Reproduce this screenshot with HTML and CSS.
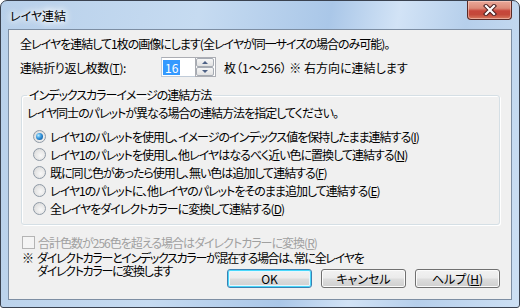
FILE: index.html
```html
<!DOCTYPE html>
<html lang="ja">
<head>
    <meta charset="UTF-8">
    <title>レイヤ連結</title>
    <link rel="stylesheet" href="styles.css">
</head>
<body>

<div class="window">
    <div class="titlebar">
        <span class="title">レイヤ連結</span>
        <span class="close">
            <svg width="14" height="12" viewBox="0 0 14 12">
                <path d="M3 2 L11 10 M11 2 L3 10" stroke="#4a2020" stroke-width="4.2" stroke-linecap="square"/>
                <path d="M3 2 L11 10 M11 2 L3 10" stroke="#ffffff" stroke-width="2.2" stroke-linecap="square"/>
            </svg>
        </span>
    </div>

    <div class="client">
        <p class="intro">全レイヤを連結して1枚の画像にします(全レイヤが同一サイズの場合のみ可能)。</p>

        <div class="count-row">
            <span class="count-label">連結折り返し枚数(<u>T</u>):</span>
            <div class="spin">
                <span class="spin-value"><span class="sel">16</span></span>
                <span class="spin-btns">
                    <span class="spin-btn"><span class="arrow-up"></span></span>
                    <span class="spin-btn"><span class="arrow-down"></span></span>
                </span>
            </div>
            <span class="count-note">枚（1～256） ※ 右方向に連結します</span>
        </div>

        <fieldset class="group">
            <legend>インデックスカラーイメージの連結方法</legend>
            <p class="group-desc">レイヤ同士のパレットが異なる場合の連結方法を指定してください。</p>
            <ul class="radios">
                <li><span class="radio checked"></span>レイヤ1のパレットを使用し、イメージのインデックス値を保持したまま連結する(<u>I</u>)</li>
                <li><span class="radio"></span>レイヤ1のパレットを使用し、他レイヤはなるべく近い色に置換して連結する(<u>N</u>)</li>
                <li><span class="radio"></span>既に同じ色があったら使用し、無い色は追加して連結する(<u>F</u>)</li>
                <li><span class="radio"></span>レイヤ1のパレットに、他レイヤのパレットをそのまま追加して連結する(<u>E</u>)</li>
                <li><span class="radio"></span>全レイヤをダイレクトカラーに変換して連結する(<u>D</u>)</li>
            </ul>
        </fieldset>

        <div class="check-row">
            <span class="checkbox"></span>合計色数が256色を超える場合はダイレクトカラーに変換(<u>R</u>)
        </div>

        <div class="footer">
            <div class="note-line1"><span class="mark">※</span>ダイレクトカラーとインデックスカラーが混在する場合は、常に全レイヤを</div>
            <div class="note-line2">ダイレクトカラーに変換します</div>
            <div class="buttons">
                <span class="btn default">OK</span>
                <span class="btn">キャンセル</span>
                <span class="btn">ヘルプ(<u>H</u>)</span>
            </div>
        </div>
    </div>
</div>

</body>
</html>
```

FILE: styles.css
```css
body {
    margin: 0;
    background: #ffffff;
    font-family: "Noto Sans CJK JP", "Liberation Sans", sans-serif;
    font-size: 12px;
    font-feature-settings: "palt";
    letter-spacing: -1px;
    color: #000000;
}

u {
    text-decoration: underline;
    text-underline-offset: 1px;
}

.window {
    width: 520px;
    height: 308px;
    box-sizing: border-box;
    border: 1px solid #3a4250;
    border-radius: 7px 7px 3px 3px;
    background: linear-gradient(100deg, #b8d0ea 0%, #c6dbf1 35%, #aac7e8 58%, #d2e3f6 70%, #b6cfeb 82%, #cde0f4 100%);
    display: flex;
    flex-direction: column;
    padding: 0 7px 7px 7px;
    overflow: hidden;
}

.titlebar {
    height: 28px;
    display: flex;
    justify-content: space-between;
    align-items: flex-start;
}

.title {
    margin: 6px 0 0 2px;
    line-height: 18px;
    letter-spacing: 0;
    text-shadow: 0 0 6px #ffffff, 0 0 8px #ffffff, 0 0 10px #ffffff;
}

.close {
    width: 43px;
    height: 18px;
    border: 1px solid #5a2a26;
    border-top: none;
    border-radius: 0 0 4px 4px;
    background: linear-gradient(#e9a899 0%, #dc8a78 40%, #c7473b 55%, #c4493a 75%, #d77a5f 100%);
    box-shadow: inset 0 0 0 1px rgba(255, 220, 210, 0.5);
    display: flex;
    justify-content: center;
    align-items: center;
}

.client {
    flex: 1;
    background: #f0f0f0;
    border: 1px solid #7d8ea3;
    padding: 5px 11px 0 11px;
    display: flex;
    flex-direction: column;
}

.intro {
    margin: 0;
    line-height: 18px;
}

.count-row {
    display: flex;
    align-items: center;
    margin-top: 4px;
    height: 20px;
}

.count-label {
    width: 141px;
    letter-spacing: -0.4px;
}

.spin {
    display: flex;
    height: 20px;
}

.spin-value {
    width: 32px;
    height: 18px;
    background: #ffffff;
    border: 1px solid #c0cbd8;
    border-top-color: #abadb3;
    border-right: none;
    display: flex;
    align-items: center;
    padding-left: 1px;
}

.sel {
    background: #3399ff;
    color: #ffffff;
    padding: 0 2px;
    line-height: 15px;
    letter-spacing: 0;
}

.spin-btns {
    display: flex;
    flex-direction: column;
    width: 18px;
    border: 1px solid #abadb3;
    background: #ffffff;
    padding: 0 1px 0 0;
}

.spin-btn {
    flex: 1;
    border: 1px solid #a6abb3;
    border-radius: 2px;
    background: linear-gradient(#f6f6f6, #e2e2e2);
    display: flex;
    justify-content: center;
    align-items: center;
}

.arrow-up {
    width: 0;
    height: 0;
    border-left: 3px solid transparent;
    border-right: 3px solid transparent;
    border-bottom: 3px solid #4d6185;
}

.arrow-down {
    width: 0;
    height: 0;
    border-left: 3px solid transparent;
    border-right: 3px solid transparent;
    border-top: 3px solid #4d6185;
}

.count-note {
    margin-left: 8px;
    letter-spacing: 0;
}

.group {
    margin: 9px 0 0 1px;
    padding: 0 5px 7px 5px;
    border: 1px solid #d5dfe5;
    border-radius: 3px;
    box-shadow: inset 1px 1px 0 #ffffff, 1px 1px 0 #ffffff;
}

.group legend {
    padding: 0 2px;
    line-height: 18px;
}

.group-desc {
    margin: 0;
    line-height: 18px;
}

.radios {
    list-style: none;
    margin: 5px 0 0 0;
    padding: 0 0 0 6px;
}

.radios li {
    display: flex;
    align-items: center;
    height: 18px;
}

.radio {
    width: 11px;
    height: 11px;
    border: 1px solid #8f9aa6;
    border-radius: 50%;
    background: radial-gradient(circle at 60% 60%, #f8f8f8 0%, #e3e3e3 60%, #d0d0d0 100%);
    margin-right: 4px;
    position: relative;
    flex-shrink: 0;
}

.radio.checked::after {
    content: "";
    position: absolute;
    left: 2px;
    top: 2px;
    width: 7px;
    height: 7px;
    border-radius: 50%;
    background: radial-gradient(circle at 35% 35%, #b8ecff 0%, #3d9be0 40%, #1162a8 80%, #0b4f8c 100%);
}

.check-row {
    display: flex;
    align-items: center;
    height: 18px;
    margin: 8px 0 0 2px;
    color: #a0a0a0;
}

.checkbox {
    width: 11px;
    height: 11px;
    border: 1px solid #b4b4b4;
    background: #f4f4f4;
    margin-right: 3px;
}

.footer {
    display: grid;
    grid-template-columns: 1fr auto;
    margin: 0 0 0 2px;
}

.note-line1 {
    grid-column: 1 / -1;
    line-height: 13px;
    letter-spacing: -1.3px;
}

.mark {
    display: inline-block;
    width: 15px;
}

.note-line2 {
    line-height: 13px;
    padding-left: 15px;
    align-self: start;
    letter-spacing: -1.3px;
}

.buttons {
    display: flex;
    gap: 9px;
    margin-top: 5px;
    letter-spacing: 0;
}

.btn {
    width: 83px;
    height: 17px;
    border: 1px solid #707070;
    border-radius: 3px;
    background: linear-gradient(#f2f2f2 0%, #ebebeb 48%, #dddddd 52%, #cfcfcf 100%);
    box-shadow: inset 0 0 0 1px #fbfbfb;
    display: flex;
    justify-content: center;
    align-items: center;
    line-height: 17px;
}

.btn.default {
    border-color: #3c7fb1;
    box-shadow: inset 0 0 0 1px #48d8fb, inset 0 0 0 2px #e8f6fd;
}
```
